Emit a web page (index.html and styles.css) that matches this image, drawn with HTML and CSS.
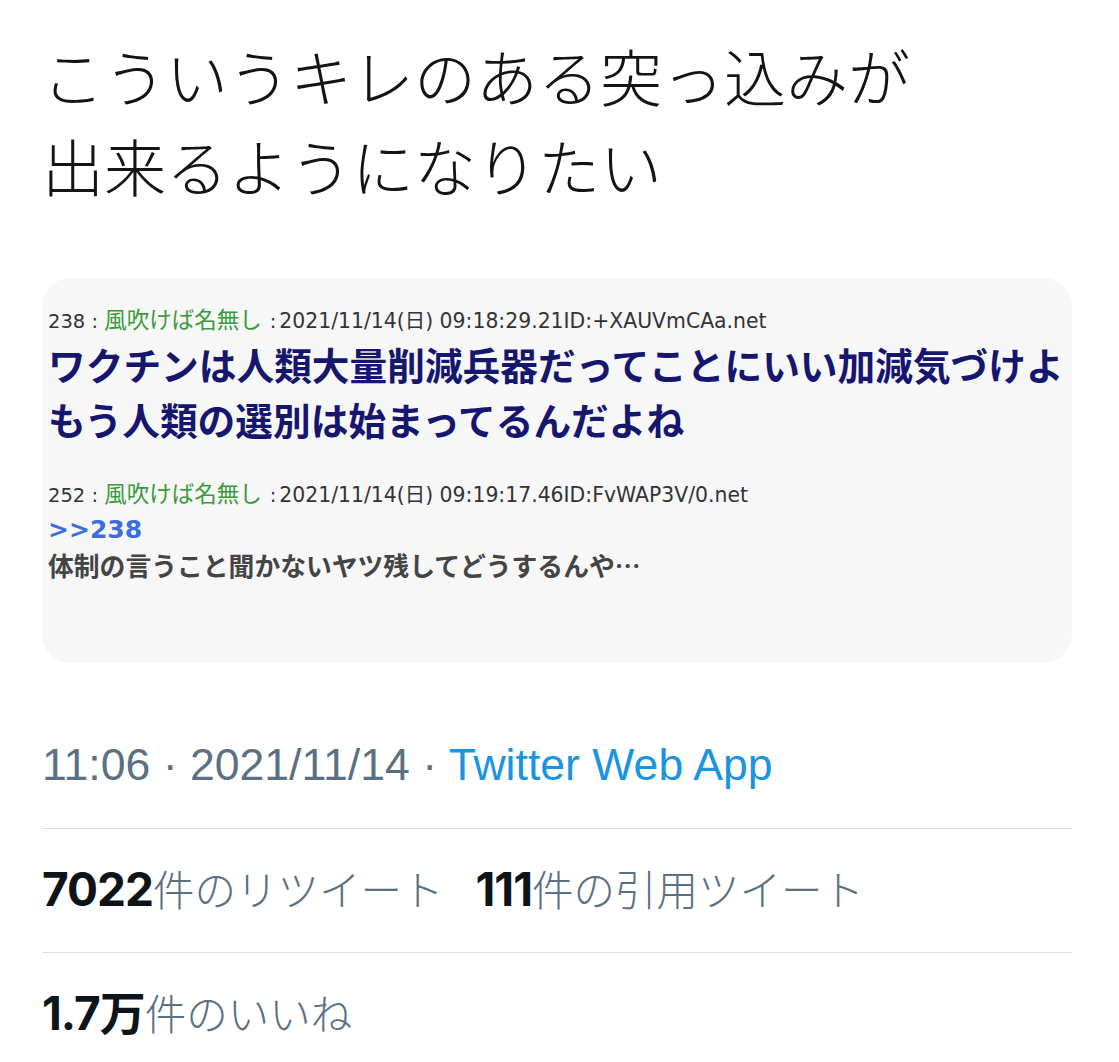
FILE: index.html
```html
<!DOCTYPE html>
<html lang="ja">
<head>
  <meta charset="UTF-8">
  <meta name="viewport" content="width=device-width, initial-scale=1.0">
  <title>Tweet</title>
  <link rel="stylesheet" href="styles.css">
</head>
<body>
  <main class="tweet">
    <p class="tweet-text">こういうキレのある突っ込みが<br>出来るようになりたい</p>

    <div class="capture">
      <div class="post">
        <div class="post-meta">238 : <span class="name">風吹けば名無し</span><span class="sep">:</span><span class="date">2021/11/14(日) 09:18:29.21ID:+XAUVmCAa.net</span></div>
        <div class="post-body big">ワクチンは人類大量削減兵器だってことにいい加減気づけよ<br>もう人類の選別は始まってるんだよね</div>
      </div>
      <div class="post">
        <div class="post-meta">252 : <span class="name">風吹けば名無し</span><span class="sep">:</span><span class="date">2021/11/14(日) 09:19:17.46ID:FvWAP3V/0.net</span></div>
        <div class="anchor">&gt;&gt;238</div>
        <div class="post-body">体制の言うこと聞かないヤツ残してどうするんや…</div>
      </div>
    </div>

    <div class="time-row">11:06 · 2021/11/14 · <a class="source" href="#">Twitter Web App</a></div>

    <div class="stat-row">
      <span class="stat"><b>7022</b>件のリツイート</span>
      <span class="stat"><b>111</b>件の引用ツイート</span>
    </div>
    <div class="stat-row">
      <span class="stat"><b>1.7万</b>件のいいね</span>
    </div>
  </main>
</body>
</html>
```

FILE: styles.css
```css
body {
  margin: 0;
  background: #fff;
  font-family: "Liberation Sans", "Noto Sans CJK JP", sans-serif;
  color: #0f1419;
}
.tweet {
  padding: 30px 47px 0 42px;
}
.tweet-text {
  margin: 0;
  font-family: "Noto Sans CJK JP", sans-serif;
  font-weight: 300;
  font-size: 62px;
  line-height: 90px;
  color: #141414;
}
.capture {
  margin-top: 68px;
  height: 385px;
  box-sizing: border-box;
  background: #f7f7f8;
  border-radius: 28px;
  padding: 26px 6px 0 6px;
  overflow: hidden;
}
.post + .post {
  margin-top: 32px;
}
.post-meta {
  font-family: "DejaVu Sans", "Noto Sans CJK JP", sans-serif;
  font-size: 19.5px;
  line-height: 28px;
  color: #333;
  white-space: nowrap;
}
.post-meta .name {
  font-family: "Noto Sans CJK JP", sans-serif;
  font-size: 22.5px;
  color: #3a9b3a;
}
.post-meta .sep {
  margin: 0 3px 0 8px;
}
.post-meta .date {
  font-size: 20.4px;
}
.post-body {
  font-family: "Noto Sans CJK JP", sans-serif;
  font-weight: 700;
  font-size: 25.8px;
  line-height: 36px;
  color: #444;
}
.post-body.big {
  font-size: 37.7px;
  line-height: 55px;
  color: #16166e;
  white-space: nowrap;
}
.anchor {
  margin-top: 3px;
  font-family: "DejaVu Sans", sans-serif;
  font-weight: 700;
  font-size: 25px;
  line-height: 34px;
  color: #3a6ee0;
}
.time-row {
  margin-top: 77px;
  padding-bottom: 38px;
  font-size: 44.6px;
  line-height: 50px;
  color: #5b7083;
}
.source {
  color: #1b95e0;
  text-decoration: none;
}
.stat-row {
  display: flex;
  gap: 32px;
  border-top: 1px solid #dcdfe2;
  padding: 34px 0 38px;
  line-height: 50px;
}
.stat {
  font-family: "Noto Sans CJK JP", sans-serif;
  font-size: 41.5px;
  color: #5b7083;
  font-weight: 300;
}
.stat b {
  font-family: "Inter", "Noto Sans CJK JP", sans-serif;
  font-size: 46px;
  font-weight: 700;
  color: #0f1419;
  letter-spacing: -1px;
}
```
